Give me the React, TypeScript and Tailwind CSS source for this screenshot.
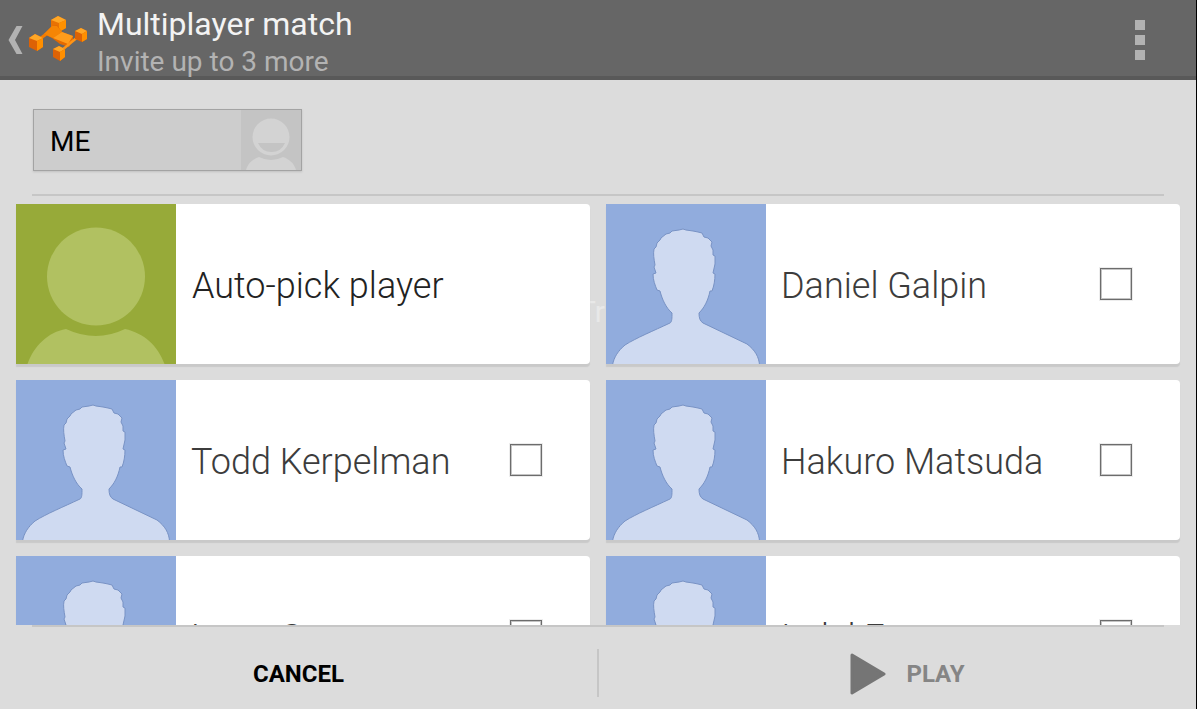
import React from "react";

function LogoIcon() {
  return (
    <svg viewBox="0 0 60 48" className="h-12 w-[60px] shrink-0" aria-hidden="true">
      <path d="M13 22 L21 16" stroke="#f57c00" strokeWidth="3" />
      <path d="M23 4 L30 0 L38 4 L38 12 L31 16 L23 12z" fill="#e87204" />
      <path d="M23 4 L30 0 L38 4 L31 7z" fill="#ffa726" />
      <path d="M31 7 L38 4 L38 12 L31 16z" fill="#ff9100" />
      <path d="M16 18 L24 10 L29 9 L34 16 L45 20 L45 24 L41 31 L32 28 L24 22z" fill="#e56a00" />
      <path d="M16 18 L24 10 L29 10 L34 16 L25 22z" fill="#f58505" />
      <path d="M25 22 L34 16 L45 20 L40 28z" fill="#ff9c1c" />
      <path d="M34 34 L51 20" stroke="#ff9516" strokeWidth="2.5" />
      <path d="M1 22 L7 18 L15 22 L15 31 L9 35 L1 31z" fill="#dd6205" />
      <path d="M1 22 L7 18 L15 22 L9 25z" fill="#ffa726" />
      <path d="M9 25 L15 22 L15 31 L9 35z" fill="#ff8f00" />
      <path d="M47 15 L53 12 L59 15 L59 23 L54 26 L47 23z" fill="#dd6205" />
      <path d="M47 15 L53 12 L59 15 L54 18z" fill="#ffa726" />
      <path d="M54 18 L59 15 L59 23 L54 26z" fill="#ff8f00" />
      <path d="M25 33 L31 30 L37 33 L37 41 L32 45 L25 41z" fill="#dd6205" />
      <path d="M25 33 L31 30 L37 33 L32 36z" fill="#ffa726" />
      <path d="M32 36 L37 33 L37 41 L32 45z" fill="#ff8f00" />
    </svg>
  );
}

function AutoAvatar() {
  return (
    <svg viewBox="0 0 160 160" className="size-40 shrink-0 bg-[#97aa39]" aria-hidden="true">
      <g fill="#b1c161">
        <circle cx="80" cy="72.500" r="49" />
        <path d="M11.500 160 C18 142 32 128 50 125 Q80 139 109 125 C128 129 142 142 148.500 160z" />
      </g>
    </svg>
  );
}

function PersonAvatar() {
  return (
    <svg viewBox="0 0 160 160" className="size-40 shrink-0 bg-[#91acdd]" aria-hidden="true">
      <path
        d="M6.500 161 C8 153 12 147 19 141 C30 134 47 127 64 119 C66 118 66 114 66 109 C60 104 56 95 54 87 L51 86 C49 81 47 76 47 70 L50 69 L48 63 L49 61 C48 55 47 50 48 45 L50 43 L51 39 L54 36 L55 34 L60 30 L64 29 L66 27 L73 26 L77 25 L80 26 L87 27 L92 28 L96 29 L98 33 L102 34 L106 38 L105 42 L107 46 L107 51 L109 52 L109 60 L107 69 L109 70 C109 76 108 82 106 87 L104 87 C102 97 98 104 93 109 C93 114 94 117 97 119 L141 140 C149 146 153 153 153.500 161z"
        fill="#cfdaf1"
        stroke="#7892c4"
        strokeWidth="1"
      />
    </svg>
  );
}

function MeAvatar() {
  return (
    <svg viewBox="0 0 60 60" className="h-full w-[60px] shrink-0 bg-[#c4c4c4]" aria-hidden="true">
      <g fill="#d3d3d3">
        <circle cx="30" cy="27" r="18.500" />
        <path d="M5 60 C7 53 12 49 18 47 Q30 53 42 47 C48 49 53 53 55 60z" />
      </g>
      <path d="M17 33 H44 Q40 42 30.500 42 Q21 42 17 33z" fill="#c4c4c4" />
    </svg>
  );
}

const players = ["Daniel Galpin", "Todd Kerpelman", "Hakuro Matsuda", "Larry Cano", "Isdel Evans"];

function PlayerCard({ name }: { name: string }) {
  return (
    <label className="relative flex h-40 overflow-hidden rounded-r bg-white shadow-[0_3px_1px_#c9c9c9]">
      <PersonAvatar />
      <span className="flex min-w-0 grow items-center justify-between pr-12 pl-[15px]">
        <span className="pt-1 text-4xl font-light whitespace-nowrap text-[#3c3c3c]">{name}</span>
        <input
          type="checkbox"
          className="size-8 shrink-0 appearance-none border border-[#6c6c6c] bg-white shadow-[inset_0_0_0_1px_#c4c4c4,0_0_0_1px_#ededed] checked:bg-[#97aa39]"
        />
      </span>
    </label>
  );
}

export default function App() {
  return (
    <div className="flex h-screen flex-col overflow-hidden border-r border-black bg-[#dcdcdc] font-['Roboto',sans-serif]">
      <header className="flex h-20 shrink-0 items-start border-b-4 border-[#595959] bg-[#666]">
        <button type="button" aria-label="Back" className="flex shrink-0 pt-4 pl-2">
          <svg viewBox="0 0 20 48" className="h-12 w-5" aria-hidden="true">
            <path d="M8.500 10 H14.500 L7 24 L14.500 38 H8.500 L0.500 24z" fill="#b2b2b2" />
          </svg>
          <LogoIcon />
        </button>
        <div className="grow pt-1 pl-[9px]">
          <h1 className="text-[32px] leading-10 text-[#f3f3f3]">Multiplayer match</h1>
          <p className="text-[28px] leading-9 text-[#b3b3b3]">Invite up to 3 more</p>
        </div>
        <button type="button" aria-label="More options" className="mt-5 mr-[51px] flex flex-col gap-[5px]">
          <span className="size-[10px] bg-[#b2b2b2]" />
          <span className="size-[10px] bg-[#b2b2b2]" />
          <span className="size-[10px] bg-[#b2b2b2]" />
        </button>
      </header>

      <main className="flex min-h-0 grow flex-col">
        <section className="mx-8 shrink-0 border-b-2 border-[#c6c6c6] pt-[29px] pb-[23px]">
          <div className="ml-px flex h-[62px] w-[269px] items-center justify-between border border-[#a3a3a3] bg-[#cdcdcd] pl-4 shadow-[0_1px_2px_#c0c0c0]">
            <span className="pt-1 text-[28px] text-black">ME</span>
            <MeAvatar />
          </div>
        </section>
        <section className="relative grid min-h-0 grow auto-rows-[160px] grid-cols-2 gap-4 overflow-hidden px-4 pt-2">
          <span className="absolute top-[98px] left-1/2 -ml-5 text-3xl leading-9 text-[#e8e8e8]" aria-hidden="true">
            Tr
          </span>
          <button type="button" className="relative flex h-40 items-center overflow-hidden rounded-r bg-white shadow-[0_3px_1px_#c9c9c9]">
            <AutoAvatar />
            <span className="pt-1 pl-4 text-4xl font-light text-[#222]">Auto-pick player</span>
          </button>
          {players.map((name) => (
            <PlayerCard key={name} name={name} />
          ))}
        </section>
      </main>

      <footer className="shrink-0">
        <div className="mx-8 h-0.5 bg-[#c6c6c6]" />
        <div className="grid h-[82px] grid-cols-[1fr_2px_1fr] items-center">
          <button type="button" className="h-full pt-3 text-2xl font-bold text-black">
            CANCEL
          </button>
          <div className="mt-2.5 h-12 bg-[#c6c6c6]" />
          <button type="button" disabled className="flex h-full items-center justify-center gap-5 pt-3 pl-5 text-2xl font-bold text-[#858585]">
            <svg viewBox="0 0 36 42" className="h-[42px] w-9" aria-hidden="true">
              <path d="M2 2 L34 21 L2 40z" fill="#757575" stroke="#757575" strokeWidth="3" strokeLinejoin="round" />
            </svg>
            PLAY
          </button>
        </div>
      </footer>
    </div>
  );
}
